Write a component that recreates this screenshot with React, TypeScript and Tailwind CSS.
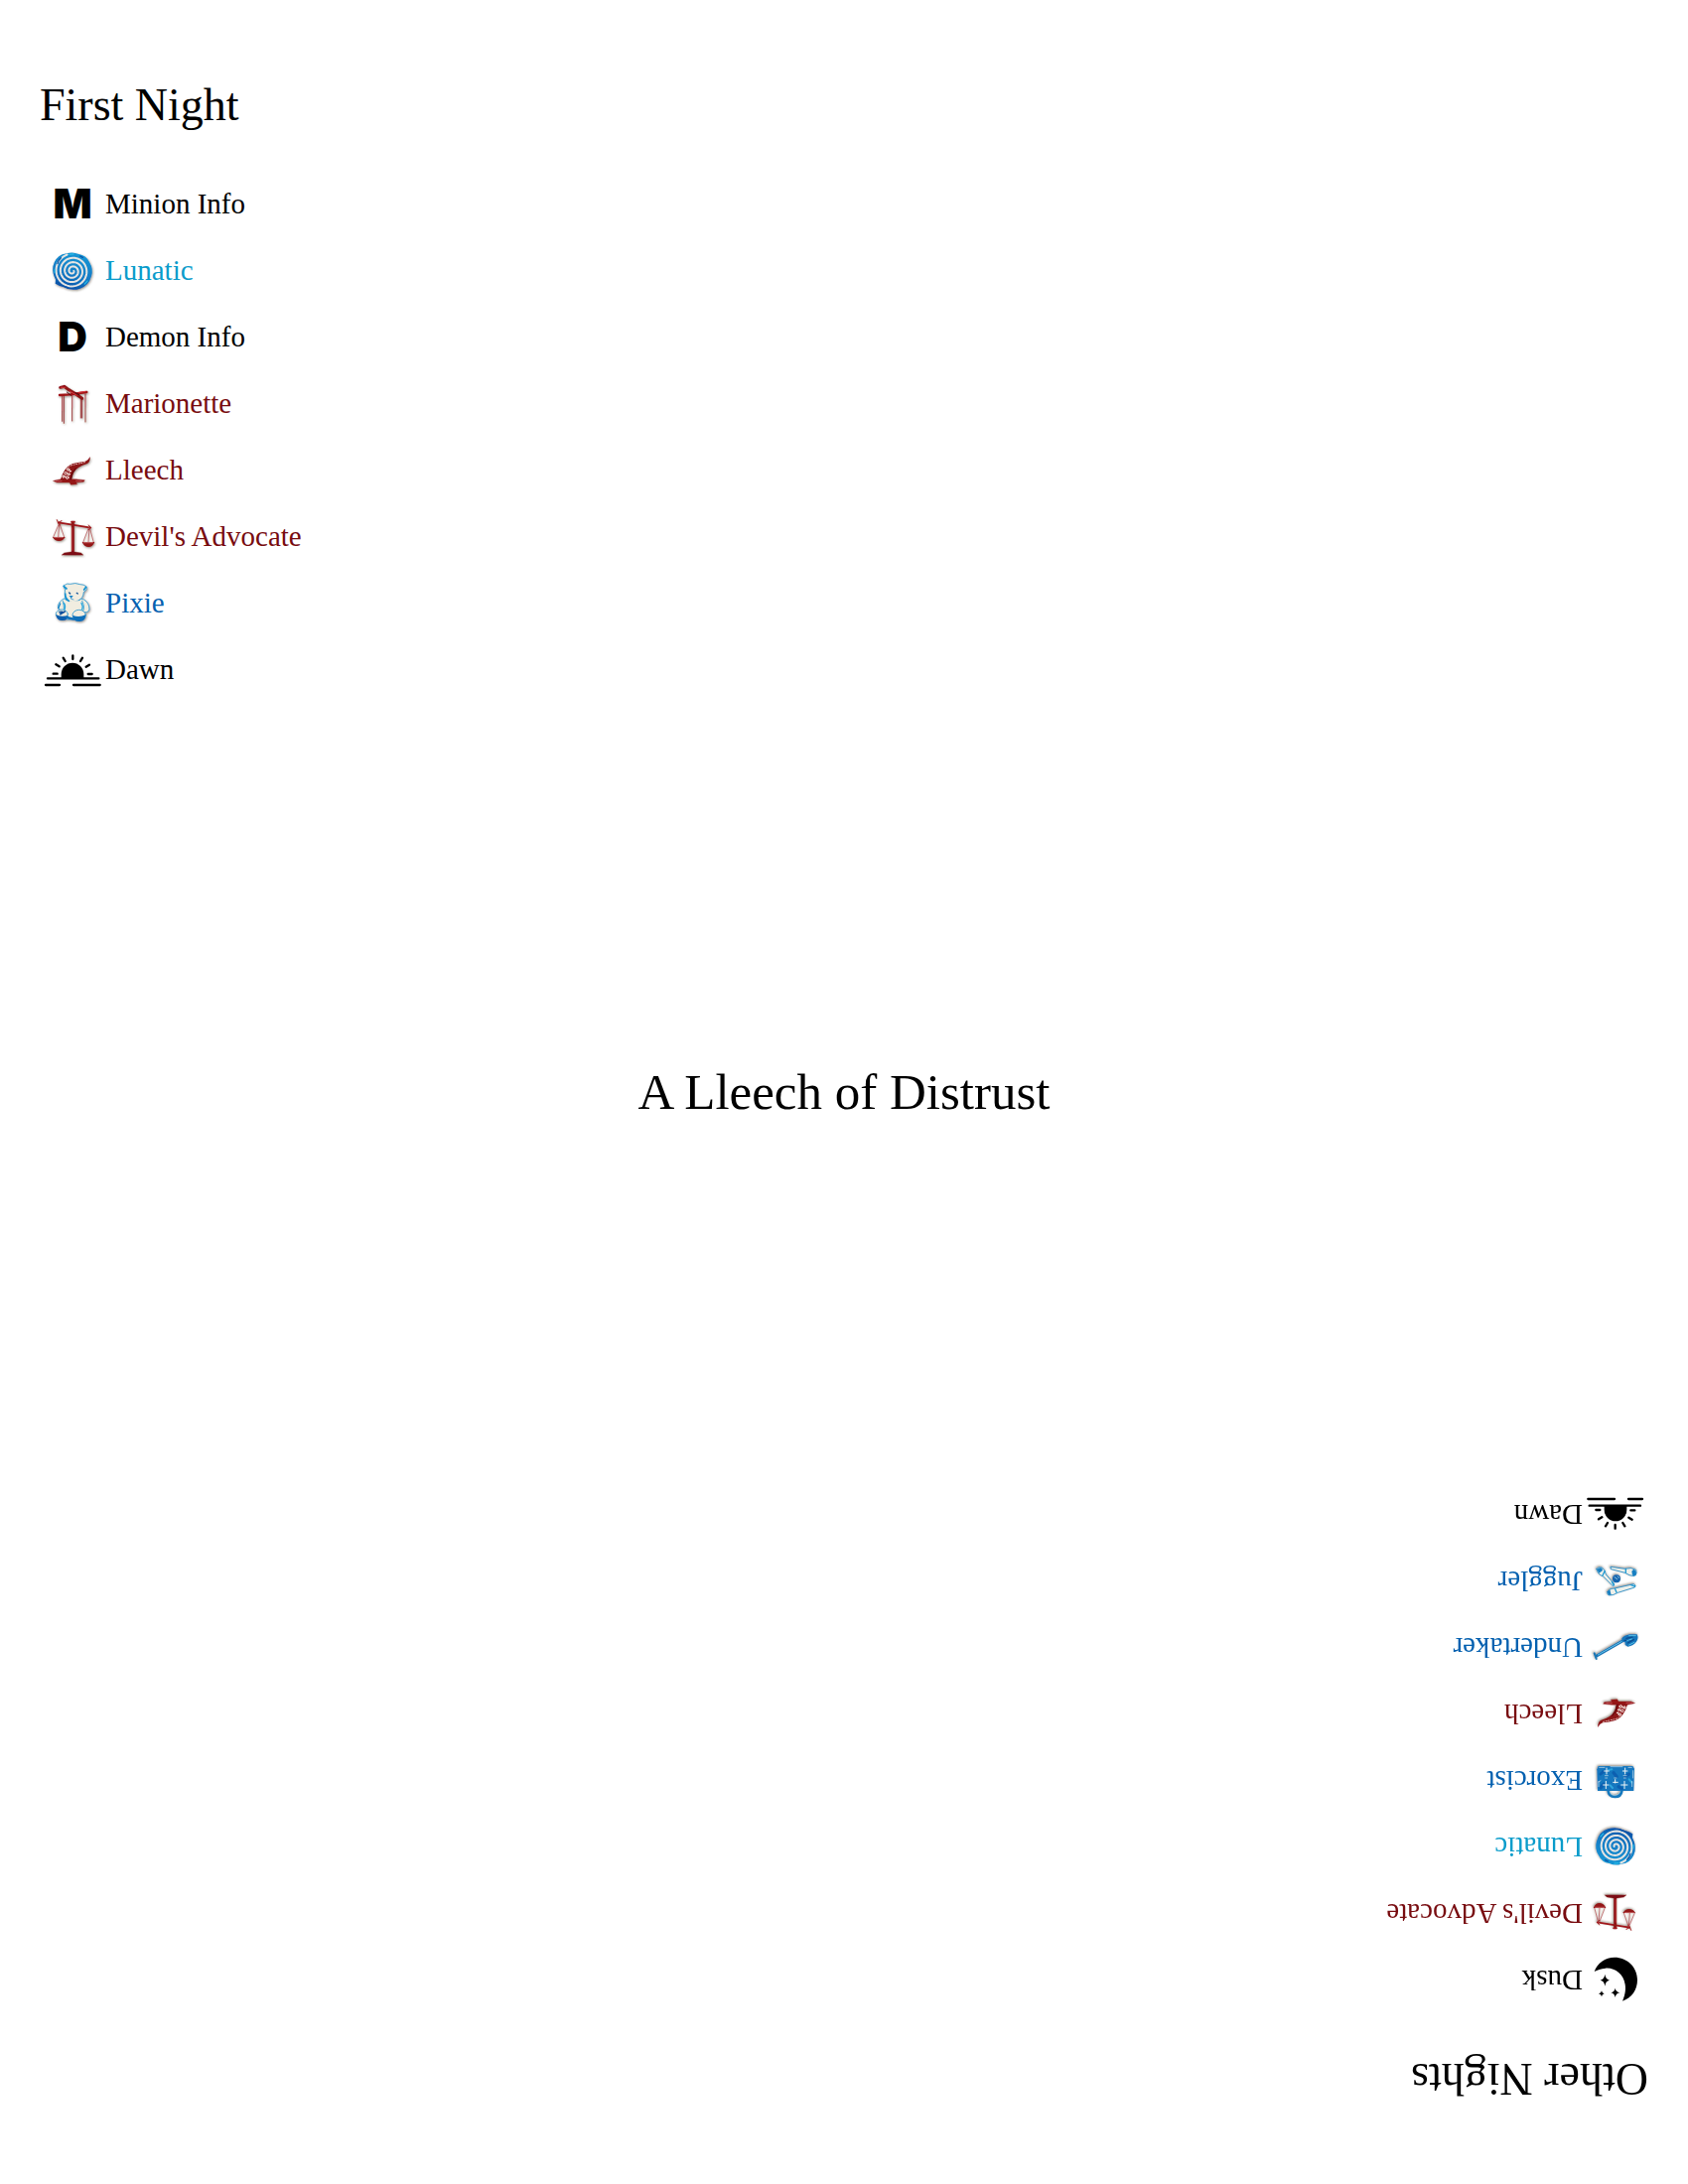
import type { ReactNode } from "react";

type Team = "info" | "outsider" | "minion" | "townsfolk";
type Entry = { name: string; team: Team; icon: ReactNode };

const teamColor: Record<Team, string> = {
  info: "text-black",
  outsider: "text-[#0a9ccb]",
  minion: "text-[#780c10]",
  townsfolk: "text-[#0561b0]",
};

function Icon({ box, children }: { box: string; children: ReactNode }) {
  return (
    <svg viewBox={box} className="size-[60px] shrink-0" aria-hidden="true" fill="none" strokeLinecap="round" strokeLinejoin="round">
      {children}
    </svg>
  );
}

function Shadowed({ id, children }: { id: string; children: ReactNode }) {
  return (
    <>
      <defs>
        <filter id={id} x="-20%" y="-20%" width="140%" height="140%">
          <feDropShadow dx="2" dy="3" stdDeviation="2.5" floodColor="#3a3020" floodOpacity="0.55" />
        </filter>
      </defs>
      <g filter={`url(#${id})`}>{children}</g>
    </>
  );
}

function Letter({ children }: { children: string }) {
  return (
    <span aria-hidden="true" className="font-['Inter',sans-serif] text-[41px] leading-none font-black">
      {children}
    </span>
  );
}

function spiral(cx: number, cy: number, from: number, to: number, turns: number) {
  const steps = 160;
  const points: string[] = [];
  for (let i = 0; i <= steps; i++) {
    const t = i / steps;
    const a = t * turns * Math.PI * 2;
    const r = from + (to - from) * t;
    points.push(`${(cx + r * Math.cos(a)).toFixed(1)} ${(cy + r * Math.sin(a)).toFixed(1)}`);
  }
  return `M${points.join("L")}`;
}

function LunaticIcon({ id }: { id: string }) {
  return (
    <Icon box="39 520 180 180">
      <defs>
        <linearGradient id={`${id}-fill`} x1="0.6" y1="0" x2="0.3" y2="1">
          <stop offset="0" stopColor="#1496d4" />
          <stop offset="0.55" stopColor="#127cc6" />
          <stop offset="1" stopColor="#0c4fa6" />
        </linearGradient>
      </defs>
      <Shadowed id={id}>
        <path
          d="M112 557Q130 551 148 559Q170 562 180 583Q193 604 186 626Q178 655 152 663Q125 672 101 658Q88 655 77 648L78 636Q67 616 70 596Q76 570 98 560Z"
          fill={`url(#${id}-fill)`}
        />
        <path d={spiral(129, 610, 4, 52, 3.7)} stroke="#e6e4e2" strokeWidth="6" />
        <path d="M84 588Q86 577 94 570M83 644Q96 656 116 661M152 565L160 569" stroke="#0a55a8" strokeWidth="4" />
        <path d="M120 560L132 559M166 649L174 640M75 605L75 615" stroke="#27b4e4" strokeWidth="4" />
      </Shadowed>
    </Icon>
  );
}

function MarionetteIcon() {
  return (
    <Icon box="39 230 180 180">
      <Shadowed id="marionette">
        <path d="M98 296V372M103 292V378M128 290V371M154 300V362M158 306V362M168 290V374" stroke="#8d1a1e" strokeWidth="2.5" />
        <path d="M99 300V340M129 296V330M169 296V325" stroke="#d98b8b" strokeWidth="1.5" />
        <path d="M90 293L122 291L172 284" stroke="#a01218" strokeWidth="7" />
        <path d="M92 270L104 267L118 277L130 284L158 303" stroke="#8f1217" strokeWidth="9" />
        <path d="M95 270L106 270M120 281L142 294M148 285L168 282" stroke="#d93b3f" strokeWidth="3" />
        <path d="M112 284L124 294M138 286L150 292" stroke="#4c0a0c" strokeWidth="3" />
      </Shadowed>
    </Icon>
  );
}

function LleechIcon({ id }: { id: string }) {
  return (
    <Icon box="39 430 180 180">
      <Shadowed id={id}>
        <path d="M71 551L94 546L140 546L166 549L163 554L140 556L143 561L124 563L120 556L82 556Z" fill="#941519" stroke="#941519" strokeWidth="1" />
        <path
          d="M93 547Q97 532 105 520Q114 505 130 499Q150 494 168 492Q178 488 182 478Q184 492 174 499Q158 504 147 511Q131 520 126 549Z"
          fill="#8c1216"
        />
        <path d="M112 515Q118 506 130 503Q148 499 166 495" stroke="#e9c9c2" strokeWidth="3" strokeDasharray="3 5" />
        <g stroke="#f7ebe5" strokeWidth="3" fill="#a1383a">
          <circle cx="102" cy="538" r="3.5" />
          <circle cx="113" cy="541" r="4" />
          <circle cx="109" cy="528" r="4" />
          <circle cx="118" cy="531" r="3" />
          <circle cx="116" cy="517" r="3.5" />
          <circle cx="122" cy="522" r="2" />
        </g>
        <path d="M124 546Q126 525 138 514" stroke="#590a0d" strokeWidth="3" />
        <path d="M80 552L96 552M140 551H156" stroke="#d87777" strokeWidth="2" />
      </Shadowed>
    </Icon>
  );
}

function ScalesIcon({ id }: { id: string }) {
  return (
    <Icon box="39 30 180 180">
      <Shadowed id={id}>
        <path d="M86 76L129 83L184 92" stroke="#a0151a" strokeWidth="5" />
        <path d="M82 68L87 80L96 70M178 84L184 92L178 98M90 73V84" stroke="#a0151a" strokeWidth="3" />
        <path d="M130 77V166" stroke="#8f1217" strokeWidth="9" />
        <path d="M128 92V160" stroke="#c94b4d" strokeWidth="2" />
        <path d="M126 74L135 74" stroke="#a0151a" strokeWidth="5" />
        <path d="M97 174L104 168L124 165L136 165L155 168L161 174Z" fill="#7c0e12" stroke="#7c0e12" strokeWidth="1" />
        <path d="M88 80L71 120M89 80L86 120M90 80L104 120" stroke="#a8383b" strokeWidth="2" />
        <path d="M178 92L161 136M180 92L177 134M181 92L193 136" stroke="#a8383b" strokeWidth="2" />
        <path d="M69 120H107Q100 132 88 132Q75 132 69 120Z" fill="#941519" />
        <path d="M158 135H196Q190 150 178 150Q164 150 158 135Z" fill="#941519" />
        <path d="M74 121H100M163 137H190" stroke="#dd8a8a" strokeWidth="2" />
      </Shadowed>
    </Icon>
  );
}

function PixieIcon() {
  return (
    <Icon box="39 230 180 180">
      <Shadowed id="pixie">
        <g fill="#f1ede0" stroke="#2b97d0" strokeWidth="2.5">
          <path d="M104 305Q88 312 85 328Q86 340 98 342L160 345Q176 350 180 338Q180 318 164 308Q154 302 146 312L116 314Z" />
          <path d="M106 276Q98 262 106 264Q112 258 122 261Q138 256 152 262Q164 262 170 268Q176 278 163 285Q162 304 146 311Q130 320 116 312Q106 306 106 290Z" />
          <path d="M100 312Q108 345 96 350L112 368L150 366L160 346Q168 330 158 312" />
          <ellipse cx="97" cy="352" rx="18" ry="14" />
          <ellipse cx="149" cy="355" rx="20" ry="16" />
        </g>
        <path d="M79 353Q92 362 116 356Q114 373 97 371Q81 371 79 353Z" fill="#0e5fae" />
        <path d="M129 355Q148 363 169 354Q169 375 150 374Q131 375 129 355Z" fill="#0e6fba" />
        <path d="M112 362L132 367" stroke="#0e6fba" strokeWidth="7" />
        <path d="M92 352L106 344M90 346L98 345" stroke="#0c4f9c" strokeWidth="5" />
        <path d="M103 268L111 275M170 270L164 278M107 290Q106 304 118 312" stroke="#0f8fd0" strokeWidth="5" />
        <path d="M119 287L122 290M142 288L145 290" stroke="#0d4f96" strokeWidth="4" />
        <path d="M119 296L131 296L125 304Z" fill="#1583c8" />
        <path d="M125 300V306L132 308" stroke="#1583c8" strokeWidth="2" />
        <path d="M103 318Q109 326 105 338M156 318Q162 328 158 338" stroke="#27a6dc" strokeWidth="4" />
        <path d="M92 320L86 334" stroke="#1583c8" strokeWidth="4" />
      </Shadowed>
    </Icon>
  );
}

function DawnIcon() {
  return (
    <Icon box="39 431 180 180">
      <path d="M95 545V534A34 35 0 0 1 163 534V545Z" fill="#000" />
      <path d="M54 546H208M48 566H90M132 566H212" stroke="#000" strokeWidth="7" />
      <path d="M130 477V488M101 484L107 494M159 484L153 494M79 504L89 510M180 505L170 511M71 532H83M176 533H188" stroke="#000" strokeWidth="7" />
    </Icon>
  );
}

/* The night-only icons are plotted upside down and turned upright by their group. */
function DuskIcon() {
  return (
    <Icon box="681 220 180 180">
      <g transform="rotate(180 771 310)" fill="#000">
        <path d="M707 286C716 260 740 243 768 243C806 243 837 272 837 311C837 342 820 366 792 375C798 362 803 344 800 325C795 293 769 274 741 276C727 277 716 281 707 286Z" />
        <path d="M739 294Q741 309 753 312Q741 314 739 330Q737 314 725 312Q737 309 739 294Z" />
        <path d="M770 336Q772 347 784 350Q772 352 770 364Q768 352 757 350Q768 347 770 336Z" />
        <path d="M729 344Q730 351 737 353Q730 354 729 362Q728 354 720 353Q728 351 729 344Z" />
      </g>
    </Icon>
  );
}

function ExorcistIcon() {
  return (
    <Icon box="681 220 180 180">
      <Shadowed id="exorcist">
        <g transform="rotate(180 771 310)">
          <path d="M749 343Q750 361 769 361Q788 361 790 343" stroke="#1779bd" strokeWidth="8" />
          <path d="M753 346Q756 356 769 357Q782 356 785 346" stroke="#8dcde8" strokeWidth="1.5" />
          <path d="M719 268H823L828 276L826 343H717L715 278Z" fill="#1377bf" />
          <path d="M726 292L735 284M765 288L775 300M800 300L812 292M726 334L735 322M780 330L790 336" stroke="#0b5fb0" strokeWidth="9" />
          <path d="M750 280L760 278M812 308L820 318M755 326L762 334" stroke="#2fa5dc" strokeWidth="6" />
          <path d="M722 272H738M756 270H792M810 272H820M824 282V304M720 314V330M720 316L726 312M821 314V330" stroke="#dfeaf0" strokeWidth="2" />
          <g stroke="#f1f4f4" strokeWidth="3">
            <path d="M744 274V292M737 283H751M800 274V292M793 283H807" />
            <path d="M742 314V336M734 325H750M798 314V336M788 325H807" />
            <path d="M770 309V319M764 317H778" />
          </g>
          <g stroke="#d7e4ea" strokeWidth="2">
            <path d="M739 297H748M740 304H746M795 297H804M796 304H802M767 304H774" />
          </g>
        </g>
      </Shadowed>
    </Icon>
  );
}

function UndertakerIcon() {
  return (
    <Icon box="681 420 180 180">
      <Shadowed id="undertaker">
        <g transform="rotate(180 771 510)">
          <path d="M714 537L792 492" stroke="#1673b6" strokeWidth="8" />
          <path d="M718 534L790 493" stroke="#65c2e6" strokeWidth="3" />
          <path d="M707 529L713 546" stroke="#1c78b5" strokeWidth="6" />
          <path d="M790 484Q796 475 814 472L836 472Q842 484 834 494Q826 506 808 509L800 504L800 496L791 494Z" fill="#1475ba" />
          <path d="M804 484L822 480M808 498L826 488M798 490L812 490" stroke="#0a4d91" strokeWidth="4" />
          <path d="M812 476L832 476M812 504L828 496M806 491L820 486" stroke="#56bfe6" strokeWidth="3" />
        </g>
      </Shadowed>
    </Icon>
  );
}

function JugglerIcon() {
  return (
    <Icon box="681 220 180 180">
      <Shadowed id="juggler">
        <g transform="rotate(180 771 310)">
          <g fill="#eef0ea" stroke="#1b86c2" strokeWidth="2.5">
            <path d="M714 275Q718 268 730 271Q740 278 742 292L768 322L763 327L734 298Q716 292 714 275Z" />
            <path d="M757 269L764 270L800 275Q818 269 833 278Q838 290 828 297Q812 296 800 287L758 276Z" />
            <path d="M747 345Q750 335 768 334L826 321L831 325L829 331L778 347Q764 356 751 355Q745 352 747 345Z" />
          </g>
          <path d="M715 277Q722 270 730 273L732 280L721 288ZM826 276Q838 282 832 296L822 294L820 282ZM746 344L754 338L758 354L749 354Z" fill="#187fc2" />
          <path d="M738 282L732 295M802 275V287M770 336L774 346M760 314L766 325M818 324L830 328" stroke="#1a9ad4" strokeWidth="4" />
          <circle cx="774" cy="305" r="12" fill="#1264ad" />
          <path d="M768 300L776 306M778 298L781 302" stroke="#8fc8e6" strokeWidth="3" />
        </g>
      </Shadowed>
    </Icon>
  );
}

const firstNight: Entry[] = [
  { name: "Minion Info", team: "info", icon: <Letter>M</Letter> },
  { name: "Lunatic", team: "outsider", icon: <LunaticIcon id="lunatic-first" /> },
  { name: "Demon Info", team: "info", icon: <Letter>D</Letter> },
  { name: "Marionette", team: "minion", icon: <MarionetteIcon /> },
  { name: "Lleech", team: "minion", icon: <LleechIcon id="lleech-first" /> },
  { name: "Devil's Advocate", team: "minion", icon: <ScalesIcon id="scales-first" /> },
  { name: "Pixie", team: "townsfolk", icon: <PixieIcon /> },
  { name: "Dawn", team: "info", icon: <DawnIcon /> },
];

const otherNights: Entry[] = [
  { name: "Dusk", team: "info", icon: <DuskIcon /> },
  { name: "Devil's Advocate", team: "minion", icon: <ScalesIcon id="scales-other" /> },
  { name: "Lunatic", team: "outsider", icon: <LunaticIcon id="lunatic-other" /> },
  { name: "Exorcist", team: "townsfolk", icon: <ExorcistIcon /> },
  { name: "Lleech", team: "minion", icon: <LleechIcon id="lleech-other" /> },
  { name: "Undertaker", team: "townsfolk", icon: <UndertakerIcon /> },
  { name: "Juggler", team: "townsfolk", icon: <JugglerIcon /> },
  { name: "Dawn", team: "info", icon: <DawnIcon /> },
];

function NightOrder({ title, entries }: { title: string; entries: Entry[] }) {
  return (
    <section className="px-10 pt-20">
      <h2 className="text-[46px] leading-[52px]">{title}</h2>
      <ul className="mt-10">
        {entries.map((entry) => (
          <li key={entry.name} className="flex h-[67px] items-center">
            <span className="flex w-[66px] shrink-0 justify-center">{entry.icon}</span>
            <span className={`text-[29px] leading-none ${teamColor[entry.team]}`}>{entry.name}</span>
          </li>
        ))}
      </ul>
    </section>
  );
}

export default function App() {
  return (
    <main className="flex min-h-screen flex-col justify-between bg-white font-['Liberation_Serif',serif] text-black">
      <NightOrder title="First Night" entries={firstNight} />
      <h1 className="text-center text-[51px] leading-none">A Lleech of Distrust</h1>
      <div className="rotate-180">
        <NightOrder title="Other Nights" entries={otherNights} />
      </div>
    </main>
  );
}
